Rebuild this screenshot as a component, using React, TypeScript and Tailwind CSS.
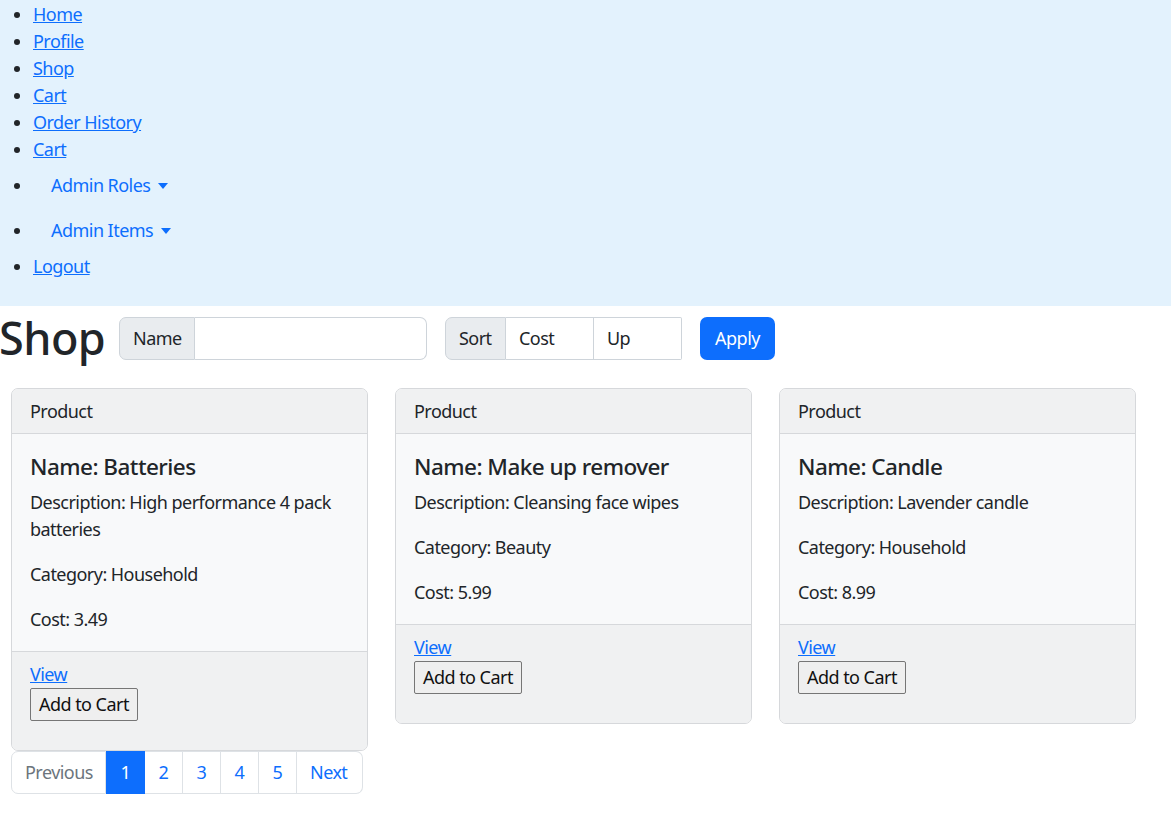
import React from "react";

const font = { fontFamily: '"Noto Sans", "Open Sans", sans-serif' };

const navLinks = ["Home", "Profile", "Shop", "Cart", "Order History", "Cart"];

const products = [
  {
    name: "Batteries",
    description: "High performance 4 pack batteries",
    category: "Household",
    cost: "3.49",
  },
  {
    name: "Make up remover",
    description: "Cleansing face wipes",
    category: "Beauty",
    cost: "5.99",
  },
  {
    name: "Candle",
    description: "Lavender candle",
    category: "Household",
    cost: "8.99",
  },
];

function Caret() {
  return (
    <span className="inline-block align-[3px] ml-[8px] w-0 h-0 border-t-[6px] border-t-[#0d6efd] border-x-[5.5px] border-x-transparent" />
  );
}

function ProductCard({ p }: { p: (typeof products)[number] }) {
  return (
    <div className="border border-[#d6d8db] rounded-[7px] bg-[#f8f9fa] overflow-hidden">
      <div className="h-[45px] px-[18px] flex items-center bg-[#f0f1f2] border-b border-[#d6d8db]">
        Product
      </div>
      <div className="px-[18px] pt-[19px]">
        <h5 className="text-[22.5px] font-medium leading-[27px] mb-[9px]">Name: {p.name}</h5>
        <p className="mb-[18px]">Description: {p.description}</p>
        <p className="mb-[18px]">Category: {p.category}</p>
        <p className="mb-[18px]">Cost: {p.cost}</p>
      </div>
      <div className="bg-[#f0f1f2] border-t border-[#d6d8db] px-[18px] pt-[9px] pb-[29px]">
        <a href="#" className="text-[#0d6efd] underline block w-fit">
          View
        </a>
        <button className="border border-[#767676] bg-[#efefef] rounded-[2px] px-[8px] h-[33px] leading-[27px] text-[#111]">
          Add to Cart
        </button>
      </div>
    </div>
  );
}

export default function App() {
  return (
    <div
      className="min-h-screen bg-white text-[#212529] text-[18px] leading-[27px] tracking-[-0.03em]"
      style={font}
    >
      {/* Nav */}
      <nav className="bg-[#e3f2fd] h-[306px] pt-px">
        <ul className="list-disc pl-[33px] marker:text-[#212529]">
          {navLinks.map((l, i) => (
            <li key={i}>
              <a href="#" className="text-[#0d6efd] underline">
                {l}
              </a>
            </li>
          ))}
          <li>
            <a href="#" className="inline-block py-[9px] px-[18px] text-[#0d6efd]">
              Admin Roles
              <Caret />
            </a>
          </li>
          <li>
            <a href="#" className="inline-block py-[9px] px-[18px] text-[#0d6efd]">
              Admin Items
              <Caret />
            </a>
          </li>
          <li>
            <a href="#" className="text-[#0d6efd] underline">
              Logout
            </a>
          </li>
        </ul>
      </nav>

      {/* Shop header + filters */}
      <div className="h-[64px] flex items-center gap-[18px]">
        <h1 className="text-[45px] font-medium leading-[54px] w-[102px] whitespace-nowrap -ml-[1px]">Shop</h1>
        <div className="flex h-[43px] w-[308px]">
          <span className="flex items-center px-[13px] bg-[#e9ecef] border border-[#ced4da] rounded-l-[7px] w-[76px]">
            Name
          </span>
          <input
            className="flex-1 min-w-0 border border-l-0 border-[#ced4da] rounded-r-[7px] bg-white px-[13px] outline-none"
            style={font}
          />
        </div>
        <div className="flex h-[43px]">
          <span className="flex items-center px-[13px] bg-[#e9ecef] border border-[#ced4da] rounded-l-[7px] w-[61px]">
            Sort
          </span>
          <span className="flex items-center px-[13px] bg-white border border-l-0 border-[#ced4da] w-[88px]">
            Cost
          </span>
          <span className="flex items-center px-[13px] bg-white border border-l-0 border-[#ced4da] rounded-r-[2px] w-[88px]">
            Up
          </span>
        </div>
        <button className="h-[43px] w-[75px] bg-[#0d6efd] text-white rounded-[7px]">Apply</button>
      </div>

      {/* Products */}
      <div className="pt-[18px] pl-[11px] grid grid-cols-[357px_357px_357px] gap-x-[27px] items-start">
        {products.map((p) => (
          <ProductCard key={p.name} p={p} />
        ))}
      </div>

      {/* Pagination */}
      <div className="pl-[11px]">
        <div className="flex h-[43px] w-fit">
          <span className="flex items-center px-[13px] border border-[#dee2e6] rounded-l-[7px] text-[#6c757d] bg-white w-[95px]">
            Previous
          </span>
          <span className="flex items-center justify-center bg-[#0d6efd] text-white border border-[#0d6efd] w-[39px]">
            1
          </span>
          {["2", "3", "4", "5"].map((n) => (
            <a
              key={n}
              href="#"
              className="flex items-center justify-center border border-l-0 border-[#dee2e6] text-[#0d6efd] w-[38px]"
            >
              {n}
            </a>
          ))}
          <a
            href="#"
            className="flex items-center px-[13px] border border-l-0 border-[#dee2e6] rounded-r-[7px] text-[#0d6efd] w-[66px]"
          >
            Next
          </a>
        </div>
      </div>
    </div>
  );
}
